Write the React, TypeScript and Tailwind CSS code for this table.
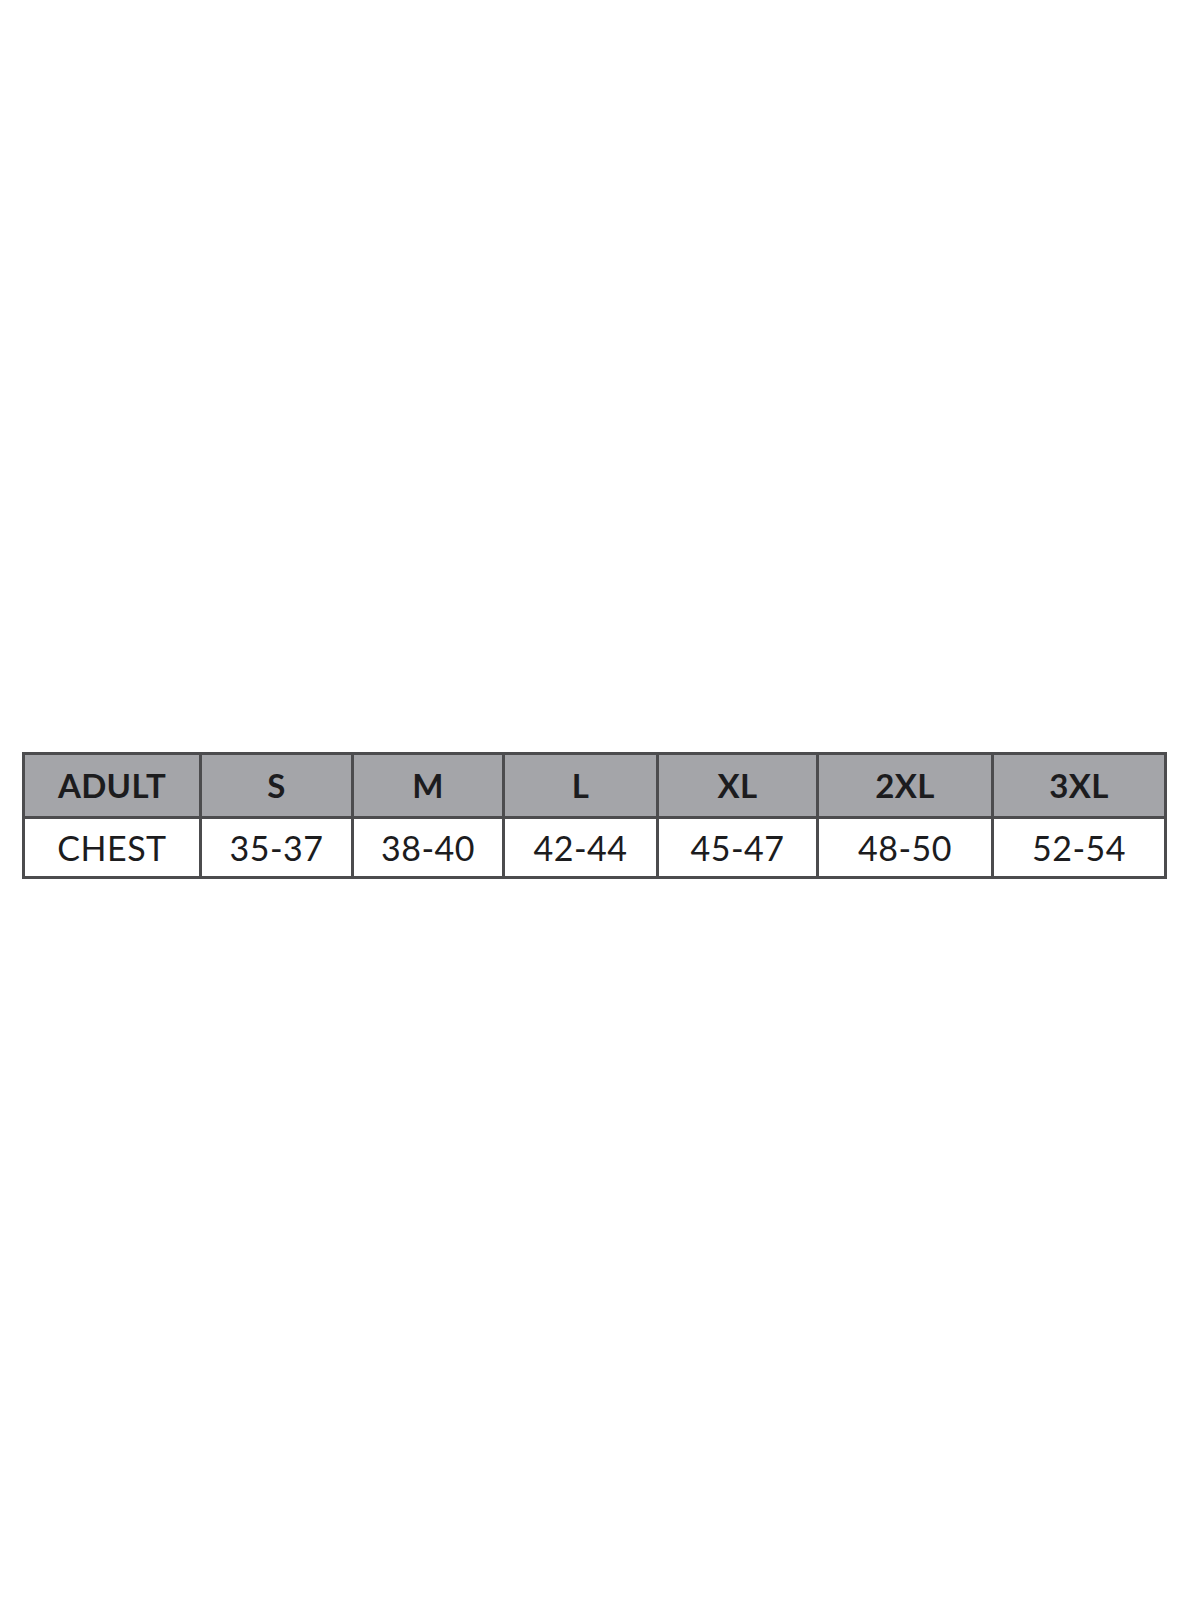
import React from "react";

const heads = ["ADULT", "S", "M", "L", "XL", "2XL", "3XL"];
const vals = ["CHEST", "35-37", "38-40", "42-44", "45-47", "48-50", "52-54"];
const widths = ["w-[177px]", "w-[152px]", "w-[151px]", "w-[154px]", "w-[160px]", "w-[175px]", "w-[173px]"];

export default function App() {
  return (
    <div className="w-[1200px] h-[1600px] bg-white pt-[752px] pl-[22px]" style={{ fontFamily: "Lato, 'Open Sans', sans-serif" }}>
      <table className="border-collapse table-fixed w-[1144px] text-[#1c1c1e]">
        <tbody>
          <tr className="h-[64px] bg-[#a4a5a9]">
            {heads.map((h, i) => (
              <td key={h} className={`${widths[i]} border-[3px] border-[#4c4c4e] text-center font-bold text-[33px] leading-none p-0 tracking-[0.3px]`}>
                {h}
              </td>
            ))}
          </tr>
          <tr className="h-[60px] bg-white">
            {vals.map((v, i) => (
              <td key={v} className={`${widths[i]} border-[3px] border-[#4c4c4e] text-center text-[34px] leading-none p-0 tracking-[0.5px]`}>
                {v}
              </td>
            ))}
          </tr>
        </tbody>
      </table>
    </div>
  );
}
